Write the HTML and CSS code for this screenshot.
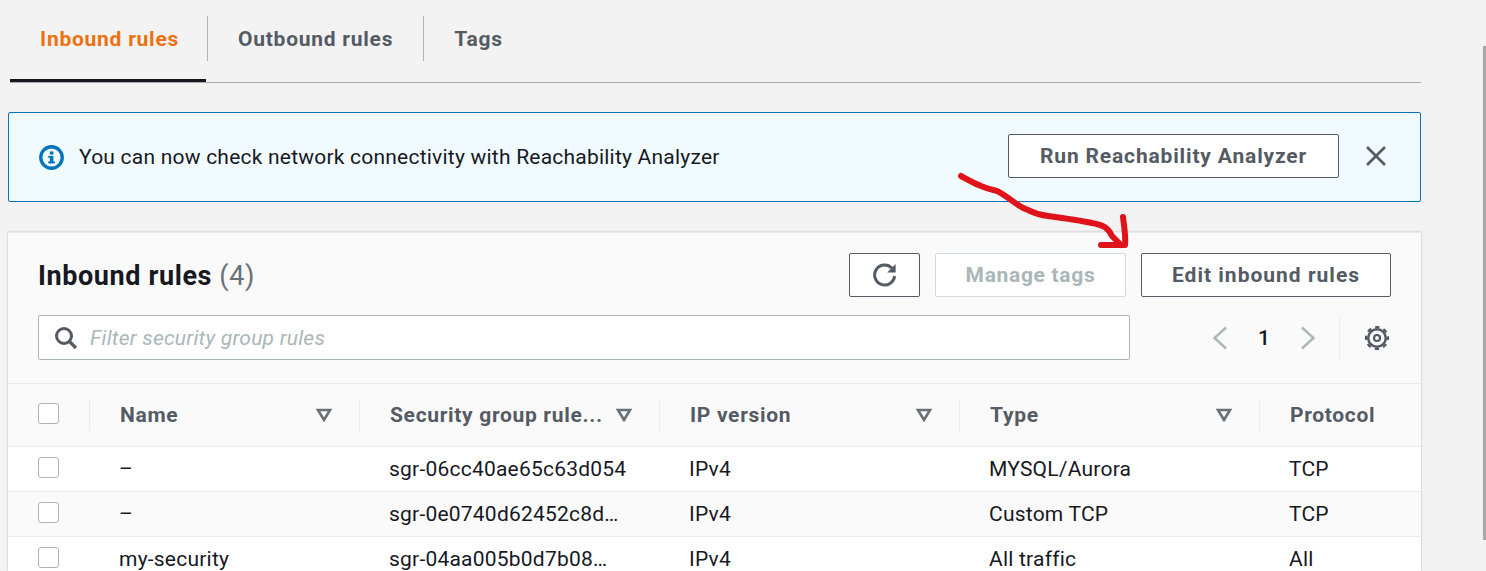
FILE: index.html
```html
<!DOCTYPE html>
<html>
<head>
    <meta charset="utf-8">
    <meta name="viewport" content="width=device-width, initial-scale=1">
    <title>Inbound rules</title>
    <link rel="stylesheet" href="styles.css">
</head>
<body>
    <div class="page">
        <div class="tabs">
            <a class="tab active">Inbound rules</a>
            <a class="tab">Outbound rules</a>
            <a class="tab">Tags</a>
        </div>

        <div class="alert">
            <svg class="info" viewBox="0 0 24 24"><circle cx="12" cy="12" r="10.3" fill="none" stroke="#0073bb" stroke-width="3.2"/><rect x="10.4" y="10.5" width="3.4" height="7" fill="#0073bb"/><rect x="8.8" y="15.8" width="6.6" height="1.8" fill="#0073bb"/><rect x="8.8" y="10.5" width="3" height="1.7" fill="#0073bb"/><rect x="10.4" y="6.2" width="3.4" height="3" fill="#0073bb"/></svg>
            <span class="alert-text">You can now check network connectivity with Reachability Analyzer</span>
            <button type="button" class="btn run">Run Reachability Analyzer</button>
            <svg class="close" viewBox="0 0 22 22"><path d="M2 2 L20 20 M20 2 L2 20" fill="none" stroke="#545b64" stroke-width="2.6"/></svg>
        </div>

        <div class="card">
            <div class="card-top">
                <div class="row-head">
                    <h2>Inbound rules <span class="count">(4)</span></h2>
                    <button type="button" class="btn refresh"><svg viewBox="0 0 26 26"><path d="M19.8 6 A10 10 0 1 0 22.6 14" fill="none" stroke="#545b64" stroke-width="3"/><path d="M23.6 2 V10.4 H15.2 Z" fill="#545b64"/></svg></button>
                    <button type="button" class="btn disabled">Manage tags</button>
                    <button type="button" class="btn edit">Edit inbound rules</button>
                </div>
                <div class="row-filter">
                    <div class="filter">
                        <svg class="search" viewBox="0 0 24 24"><circle cx="10" cy="10" r="7.5" fill="none" stroke="#545b64" stroke-width="3"/><path d="M15.5 15.5 L22 22" stroke="#545b64" stroke-width="3.2"/></svg>
                        <span class="placeholder">Filter security group rules</span>
                    </div>
                    <div class="pager">
                        <svg class="chev" viewBox="0 0 16 24"><path d="M14 1.5 L2.5 12 L14 22.5" fill="none" stroke="#aab7b8" stroke-width="2.4"/></svg>
                        <span class="page-num">1</span>
                        <svg class="chev" viewBox="0 0 16 24"><path d="M2 1.5 L13.5 12 L2 22.5" fill="none" stroke="#aab7b8" stroke-width="2.4"/></svg>
                    </div>
                    <div class="settings">
                        <svg viewBox="0 0 26 26"><circle cx="13" cy="13" r="8.8" fill="none" stroke="#545b64" stroke-width="2.5"/><circle cx="13" cy="13" r="10.9" fill="none" stroke="#545b64" stroke-width="2.4" stroke-dasharray="4.28 4.28" stroke-dashoffset="2.14"/><circle cx="13" cy="13" r="3" fill="none" stroke="#545b64" stroke-width="2.2"/></svg>
                    </div>
                </div>
            </div>

            <table class="rules">
                <colgroup>
                    <col class="c-check"><col class="c-name"><col class="c-wide"><col class="c-wide"><col class="c-wide"><col>
                </colgroup>
                <thead>
                    <tr>
                        <th class="check"><span class="box"></span></th>
                        <th><div class="th-in">Name <svg class="sort" viewBox="0 0 16 14"><path d="M2 2 H14 L8 12 Z" fill="none" stroke="#687078" stroke-width="2.6"/></svg></div></th>
                        <th><div class="th-in">Security group rule... <svg class="sort" viewBox="0 0 16 14"><path d="M2 2 H14 L8 12 Z" fill="none" stroke="#687078" stroke-width="2.6"/></svg></div></th>
                        <th><div class="th-in">IP version <svg class="sort" viewBox="0 0 16 14"><path d="M2 2 H14 L8 12 Z" fill="none" stroke="#687078" stroke-width="2.6"/></svg></div></th>
                        <th><div class="th-in">Type <svg class="sort" viewBox="0 0 16 14"><path d="M2 2 H14 L8 12 Z" fill="none" stroke="#687078" stroke-width="2.6"/></svg></div></th>
                        <th><div class="th-in">Protocol</div></th>
                    </tr>
                </thead>
                <tbody>
                    <tr>
                        <td class="check"><span class="box"></span></td>
                        <td>–</td><td>sgr-06cc40ae65c63d054</td><td>IPv4</td><td>MYSQL/Aurora</td><td>TCP</td>
                    </tr>
                    <tr class="alt">
                        <td class="check"><span class="box"></span></td>
                        <td>–</td><td>sgr-0e0740d62452c8d…</td><td>IPv4</td><td>Custom TCP</td><td>TCP</td>
                    </tr>
                    <tr>
                        <td class="check"><span class="box"></span></td>
                        <td>my-security</td><td>sgr-04aa005b0d7b08…</td><td>IPv4</td><td>All traffic</td><td>All</td>
                    </tr>
                </tbody>
            </table>
        </div>
    </div>

    <div class="scrollbar"></div>

    <!-- hand drawn arrow on top of the screenshot -->
    <svg class="scribble" viewBox="0 0 200 100">
        <path d="M3 6 C14 12 24 18 39 21 C50 26 58 36 70 40 C76 43 82 45 90 46 C105 48 120 50 134 53 C146 55 150 58 154 66 L163 75" fill="none" stroke="#e0131a" stroke-width="6" stroke-linecap="round" stroke-linejoin="round"/>
        <path d="M165 47 C166 56 168 66 167 75 L143 75" fill="none" stroke="#e0131a" stroke-width="6" stroke-linecap="round" stroke-linejoin="round"/>
    </svg>
</body>
</html>
```

FILE: styles.css
```css
* {
    margin: 0;
    padding: 0;
    box-sizing: border-box;
}
html, body {
    height: 571px;
    overflow: hidden;
}
body {
    background-color: #f3f3f3;
    font-family: "Roboto", "Liberation Sans", sans-serif;
    font-size: 21px;
    letter-spacing: 0.22px;
    color: #16191f;
}
.page {
    width: 1413px;
    margin-left: 8px;
}

/* tabs */
.tabs {
    display: flex;
    height: 83px;
    margin-left: 2px;
    padding-top: 16px;
    border-bottom: 1px solid #aaaaaa;
}
.tab {
    height: 45px;
    padding: 0 30px;
    line-height: 46px;
    font-weight: 700;
    letter-spacing: 0.75px;
    white-space: nowrap;
    color: #545b64;
    border-left: 1px solid #aab7b8;
    position: relative;
}
.tab:first-child {
    border-left: none;
}
.tab.active {
    width: 197px;
    color: #ec7211;
}
.tab.active::after {
    content: "";
    position: absolute;
    left: 0;
    right: 1px;
    bottom: -21px;
    height: 3px;
    background-color: #16191f;
}

/* info box */
.alert {
    display: flex;
    align-items: center;
    height: 90px;
    margin-top: 29px;
    padding: 0 33px 0 30px;
    background-color: #f1faff;
    border: 1px solid #0073bb;
    border-radius: 2px;
}
.info {
    width: 25px;
    height: 25px;
    margin-right: 15px;
}
.alert-text {
    flex: 1;
}
.btn {
    height: 44px;
    padding-bottom: 1px;
    font-family: inherit;
    font-size: 21px;
    font-weight: 700;
    letter-spacing: 0.68px;
    color: #545b64;
    background-color: #fff;
    border: 1px solid #545b64;
    border-radius: 2px;
}
.run {
    width: 331px;
    margin-top: -2px;
    letter-spacing: 0.84px;
}
.close {
    width: 22px;
    height: 22px;
    margin-left: 26px;
    margin-top: -2px;
}

/* card */
.card {
    height: 339px;
    margin-top: 30px;
    overflow: hidden;
    background-color: #fff;
    border-top: 1px solid #eaeded;
    box-shadow: 0 0 2px rgba(0, 28, 36, 0.3);
}
.card-top {
    height: 150px;
    padding: 20px 30px 0;
    background-color: #fafafa;
}
.row-head {
    display: flex;
    align-items: center;
}
.row-head h2 {
    flex: 1;
    padding-top: 1px;
    font-size: 27px;
    font-weight: 700;
    letter-spacing: 0.6px;
}
.count {
    font-weight: 400;
    color: #687078;
}
.refresh {
    width: 71px;
    display: flex;
    align-items: center;
    justify-content: center;
}
.refresh svg {
    width: 26px;
    height: 26px;
}
.disabled {
    width: 191px;
    margin-left: 15px;
    color: #aab7b8;
    border-color: #d5dbdb;
}
.edit {
    width: 250px;
    margin-left: 15px;
    letter-spacing: 1px;
}
.row-filter {
    display: flex;
    align-items: center;
    margin-top: 18px;
}
.filter {
    display: flex;
    align-items: center;
    width: 1092px;
    height: 45px;
    padding-left: 15px;
    background-color: #fff;
    border: 1px solid #aab7b8;
    border-radius: 2px;
}
.search {
    width: 24px;
    height: 24px;
    margin-right: 12px;
}
.placeholder {
    font-style: italic;
    color: #aab7b8;
}
.pager {
    display: flex;
    align-items: center;
    width: 209px;
    padding-left: 82px;
}
.chev {
    width: 16px;
    height: 24px;
}
.page-num {
    width: 72px;
    text-align: center;
    font-weight: 500;
}
.settings {
    height: 45px;
    flex: 1;
    display: flex;
    align-items: center;
    justify-content: flex-end;
    border-left: 1px solid #eaeded;
}
.settings svg {
    width: 26px;
    height: 26px;
    margin-right: 1px;
}

/* table */
.rules {
    width: 100%;
    table-layout: fixed;
    border-collapse: collapse;
}
.c-check {
    width: 81px;
}
.c-name {
    width: 270px;
}
.c-wide {
    width: 300px;
}
.rules th {
    height: 63px;
    padding: 0;
    text-align: left;
    font-weight: 700;
    letter-spacing: 0.68px;
    color: #545b64;
    background-color: #fafafa;
    border-top: 1px solid #eaeded;
    border-bottom: 1px solid #eaeded;
}
.th-in {
    display: flex;
    align-items: center;
    justify-content: space-between;
    height: 31px;
    padding: 0 27px 0 30px;
    border-left: 1px solid #eaeded;
}
.sort {
    width: 16px;
    height: 14px;
}
.rules td {
    height: 45px;
    padding: 0 0 0 30px;
    white-space: nowrap;
    border-bottom: 1px solid #eaeded;
}
.rules .check {
    padding: 0 0 3px 30px;
}
.rules th.check {
    padding-bottom: 3px;
}
.alt td {
    background-color: #fafafa;
}
.box {
    display: block;
    width: 21px;
    height: 21px;
    background-color: #fff;
    border: 1px solid #aab7b8;
    border-radius: 3px;
}

/* page scrollbar sliver */
.scrollbar {
    position: absolute;
    top: 46px;
    left: 1483px;
    width: 3px;
    height: 494px;
    background-color: #a8a8a8;
}

.scribble {
    position: absolute;
    left: 958px;
    top: 170px;
    width: 200px;
    height: 100px;
}
```
